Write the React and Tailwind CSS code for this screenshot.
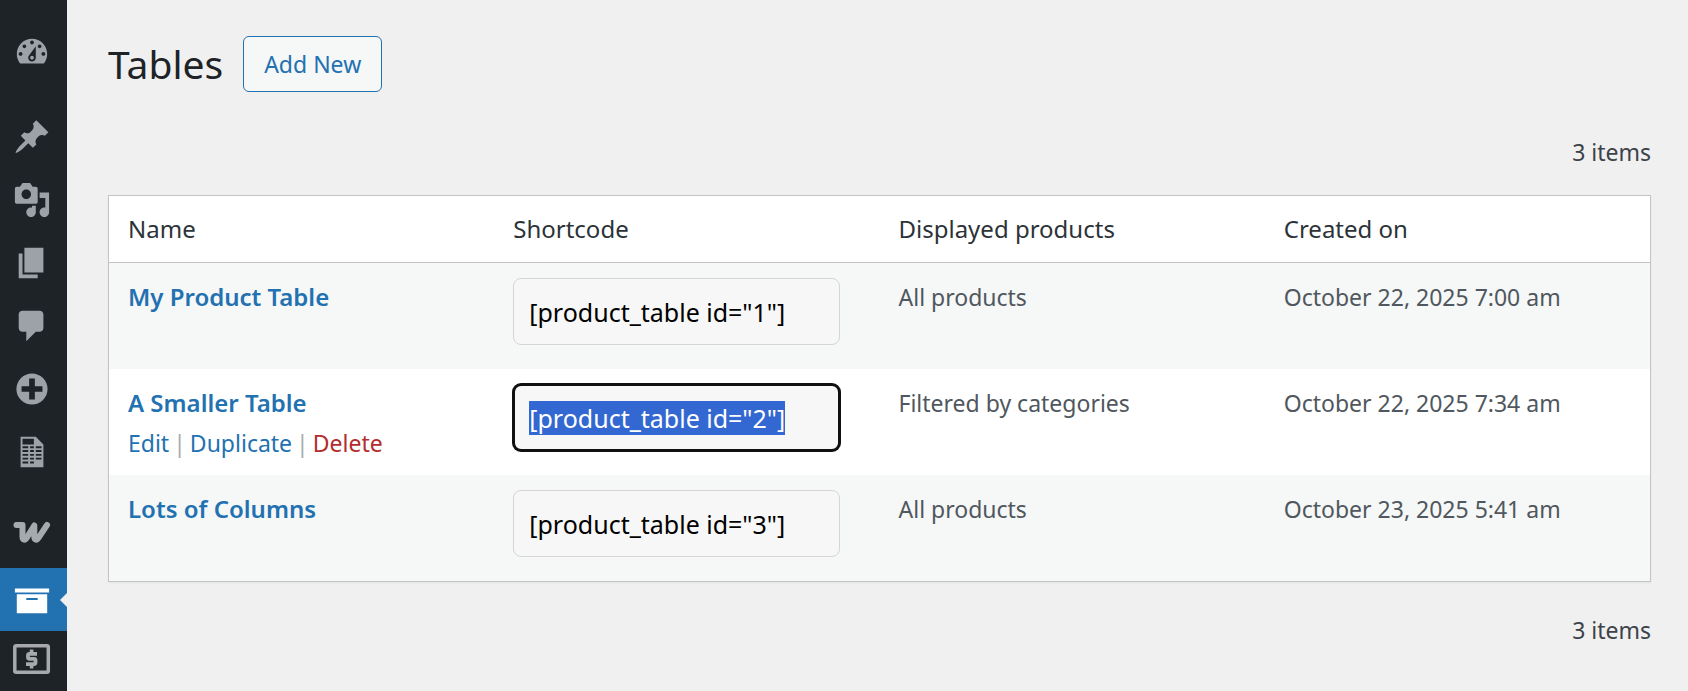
import { useEffect, useRef } from 'react';

const tables = [
  { id: 1, name: 'My Product Table', products: 'All products', created: 'October 22, 2025 7:00 am' },
  { id: 2, name: 'A Smaller Table', products: 'Filtered by categories', created: 'October 22, 2025 7:34 am', active: true },
  { id: 3, name: 'Lots of Columns', products: 'All products', created: 'October 23, 2025 5:41 am' }
];

const columns = ['Name', 'Shortcode', 'Displayed products', 'Created on'];

const icons = {
  dashboard: 'M3.76 16h12.48c1.1-1.37 1.76-3.11 1.76-5 0-4.42-3.58-8-8-8s-8 3.58-8 8c0 1.89.66 3.63 1.76 5zM10 4c.55 0 1 .45 1 1s-.45 1-1 1-1-.45-1-1 .45-1 1-1zM6 6c.55 0 1 .45 1 1s-.45 1-1 1-1-.45-1-1 .45-1 1-1zm8 0c.55 0 1 .45 1 1s-.45 1-1 1-1-.45-1-1 .45-1 1-1zm-5.37 5.55L12 7v6c0 1.1-.9 2-2 2s-2-.9-2-2c0-.57.24-1.08.63-1.45zM4 10c.55 0 1 .45 1 1s-.45 1-1 1-1-.45-1-1 .45-1 1-1zm12 0c.55 0 1 .45 1 1s-.45 1-1 1-1-.45-1-1 .45-1 1-1zm-5 3c0-.55-.45-1-1-1s-1 .45-1 1 .45 1 1 1 1-.45 1-1z',
  posts: 'M10.44 3.02l1.82-1.82 6.36 6.35-1.83 1.82c-1.05-.68-2.48-.57-3.41.36l-.75.75c-.92.93-1.04 2.35-.35 3.41l-1.83 1.82-2.41-2.41-2.8 2.79c-.42.42-3.38 2.71-3.8 2.29s1.86-3.39 2.28-3.81l2.79-2.79L4.1 9.36l1.83-1.82c1.05.69 2.48.57 3.4-.36l.75-.75c.93-.92 1.05-2.35.36-3.41z',
  media: 'M13 11V4c0-.55-.45-1-1-1h-1.67L9 1H5L3.67 3H2c-.55 0-1 .45-1 1v7c0 .55.45 1 1 1h10c.55 0 1-.45 1-1zM7 4.5c1.38 0 2.5 1.12 2.5 2.5S8.38 9.5 7 9.5 4.5 8.38 4.5 7 5.62 4.5 7 4.5zM14 6h5v10.5c0 1.38-1.12 2.5-2.5 2.5S14 17.88 14 16.5s1.12-2.5 2.5-2.5c.17 0 .34.02.5.05V9h-3V6zm-4 8.05V13h2v3.5c0 1.38-1.12 2.5-2.5 2.5S7 17.88 7 16.5 8.12 14 9.5 14c.17 0 .34.02.5.05z',
  pages: 'M6 15V2h10v13H6zm-1 1h8v2H3V5h2v11z',
  comments: 'M5 2h9c1.1 0 2 .9 2 2v7c0 1.1-.9 2-2 2h-2l-5 5v-5H5c-1.1 0-2-.9-2-2V4c0-1.1.9-2 2-2z',
  plus: 'M15.8 4.2c3.2 3.21 3.2 8.39 0 11.6-3.21 3.2-8.39 3.2-11.6 0C1 12.59 1 7.41 4.2 4.2 7.41 1 12.59 1 15.8 4.2zm-4.3 11.3v-4h4v-3h-4v-4h-3v4h-4v3h4v4h3z',
  spreadsheet: 'M12 2l4 4v12H4V2h8zm-1 4V3H5v3h6zM8 8V7H5v1h3zm3 0V7H9v1h2zm4 0V7h-3v1h3zm-7 2V9H5v1h3zm3 0V9H9v1h2zm4 0V9h-3v1h3zm-7 2v-1H5v1h3zm3 0v-1H9v1h2zm4 0v-1h-3v1h3zm-7 2v-1H5v1h3zm3 0v-1H9v1h2zm4 0v-1h-3v1h3zm-7 2v-1H5v1h3zm3 0v-1H9v1h2z',
  products: 'M19 4v2H1V4h18zM2 7h16v10H2V7zm11 3V9H7v1h6z'
};

const DashIcon = ({ name }) => (
  <svg viewBox="0 0 20 20" className="h-[38px] w-[38px]" fill="currentColor" fillRule="evenodd" aria-hidden="true">
    <path d={icons[name]} />
  </svg>
);

const WooIcon = () => (
  <svg viewBox="0 0 38 38" className="h-[38px] w-[38px]" fill="none" stroke="#a7aaad" strokeWidth="6" strokeLinecap="round" strokeLinejoin="round" aria-hidden="true">
    <path d="M3.500 11H9.500V22.500c0 3.800 2.500 4.200 4.200 1.300L21.300 11.500V22.500c0 3.800 2.500 4.200 4.200 1.300L34 11" />
  </svg>
);

const PaymentsIcon = () => (
  <svg viewBox="0 0 38 38" className="h-[38px] w-[38px]" fill="none" stroke="#a7aaad" aria-hidden="true">
    <rect x="1.800" y="5.700" width="33.500" height="26.600" rx="1.500" strokeWidth="3.500" />
    <path d="M24 13.800h-7.500a1.500 1.500 0 0 0-1.500 1.500v2a1.500 1.500 0 0 0 1.500 1.500h4.500a1.500 1.500 0 0 1 1.500 1.500v2.300a1.500 1.500 0 0 1-1.500 1.500H13" strokeWidth="3.800" />
    <path d="M18.600 9.500v4M18.600 24.500v4" strokeWidth="3.600" />
  </svg>
);

const MenuItem = ({ label, current, raised, children }) => (
  <li>
    <a
      href="#"
      aria-label={label}
      aria-current={current ? 'page' : undefined}
      className={`relative flex h-[63px] items-center pl-[13px] ${raised ? 'pb-[7px]' : ''} ${
        current ? 'bg-[#2271b1] text-white' : 'text-[#9ca2a7]'
      }`}
    >
      {children}
      {current && (
        <svg viewBox="0 0 7 14" className="absolute right-0 h-[14px] w-[7px]" fill="#f0f0f0" aria-hidden="true">
          <path d="M7 0v14L0 7z" />
        </svg>
      )}
    </a>
  </li>
);

const Sidebar = () => (
  <nav aria-label="Main menu" className="w-[67px] shrink-0 bg-[#1d2327] pt-5">
    <ul>
      <MenuItem label="Dashboard"><DashIcon name="dashboard" /></MenuItem>
    </ul>
    <ul className="mt-[22px]">
      <MenuItem label="Posts"><DashIcon name="posts" /></MenuItem>
      <MenuItem label="Media"><DashIcon name="media" /></MenuItem>
      <MenuItem label="Pages"><DashIcon name="pages" /></MenuItem>
      <MenuItem label="Comments"><DashIcon name="comments" /></MenuItem>
      <MenuItem label="Add-ons"><DashIcon name="plus" /></MenuItem>
      <MenuItem label="Spreadsheets"><DashIcon name="spreadsheet" /></MenuItem>
    </ul>
    <ul className="mt-[22px]">
      <MenuItem label="WooCommerce" raised><WooIcon /></MenuItem>
      <MenuItem label="Products" current><DashIcon name="products" /></MenuItem>
      <MenuItem label="Payments" raised><PaymentsIcon /></MenuItem>
    </ul>
  </nav>
);

const ShortcodeInput = ({ id, name, selected }) => {
  const ref = useRef(null);

  useEffect(() => {
    if (selected) {
      ref.current.focus();
      ref.current.select();
    }
  }, [selected]);

  return (
    <input
      ref={ref}
      type="text"
      readOnly
      aria-label={`Shortcode for ${name}`}
      value={`[product_table id="${id}"]`}
      onFocus={e => e.target.select()}
      className="block h-[67px] w-[327px] max-w-full rounded-lg border border-[#d5d5d5] bg-[#f7f7f7] px-[15px] text-[25px] text-black outline-none selection:bg-[#3367d1] selection:text-white focus:border-2 focus:border-[#101010] focus:px-[14px] focus:ring-1 focus:ring-[#101010]"
    />
  );
};

const App = () => {
  return (
    <div className="flex min-h-screen overflow-hidden bg-[#f0f0f0] font-['Segoe_UI','Noto_Sans',sans-serif]">
      <Sidebar />
      <main className="min-w-0 flex-1 pt-9 pr-[37px] pl-[41px]">

        {/* Header */}
        <div className="flex items-center gap-5">
          <h1 className="text-[39px] leading-[56px] text-[#1d2327]">Tables</h1>
          <button className="h-14 rounded-md border border-[#2271b1] bg-[#f6f7f7] px-5 text-[23px] text-[#2271b1]">
            Add New
          </button>
        </div>

        <p className="mt-11 text-right text-[23px] leading-8 text-[#3c434a]">3 items</p>

        <div className="mt-[27px] border border-[#c3c4c7] shadow-xs">
          <table className="w-full table-fixed border-separate border-spacing-0 bg-white text-left">
            <thead>
              <tr>
                {columns.map(column => (
                  <th key={column} scope="col" className="h-[67px] border-b border-[#c3c4c7] px-[19px] text-2xl font-normal text-[#2c3338]">
                    {column}
                  </th>
                ))}
              </tr>
            </thead>
            <tbody>
              {tables.map(table => (
                <tr key={table.id} className="h-[106px] align-top text-[23px] leading-[38px] text-[#50575e] odd:bg-[#f6f7f7]">
                  <td className="px-[19px] pt-[15px]">
                    <a href="#" className="block text-2xl leading-[38px] font-semibold text-[#2271b1]">{table.name}</a>
                    {table.active && (
                      <div className="flex gap-1 leading-[42px] text-[#a7aaad]">
                        <a href="#" className="text-[#2271b1]">Edit</a>
                        |
                        <a href="#" className="text-[#2271b1]">Duplicate</a>
                        |
                        <a href="#" className="text-[#b32d2e]">Delete</a>
                      </div>
                    )}
                  </td>
                  <td className="px-[19px] pt-[15px]">
                    <ShortcodeInput id={table.id} name={table.name} selected={table.active} />
                  </td>
                  <td className="px-[19px] pt-[15px]">{table.products}</td>
                  <td className="px-[19px] pt-[15px]">{table.created}</td>
                </tr>
              ))}
            </tbody>
          </table>
        </div>

        <p className="mt-8 text-right text-[23px] leading-8 text-[#3c434a]">3 items</p>
      </main>
    </div>
  );
};

export default App;
